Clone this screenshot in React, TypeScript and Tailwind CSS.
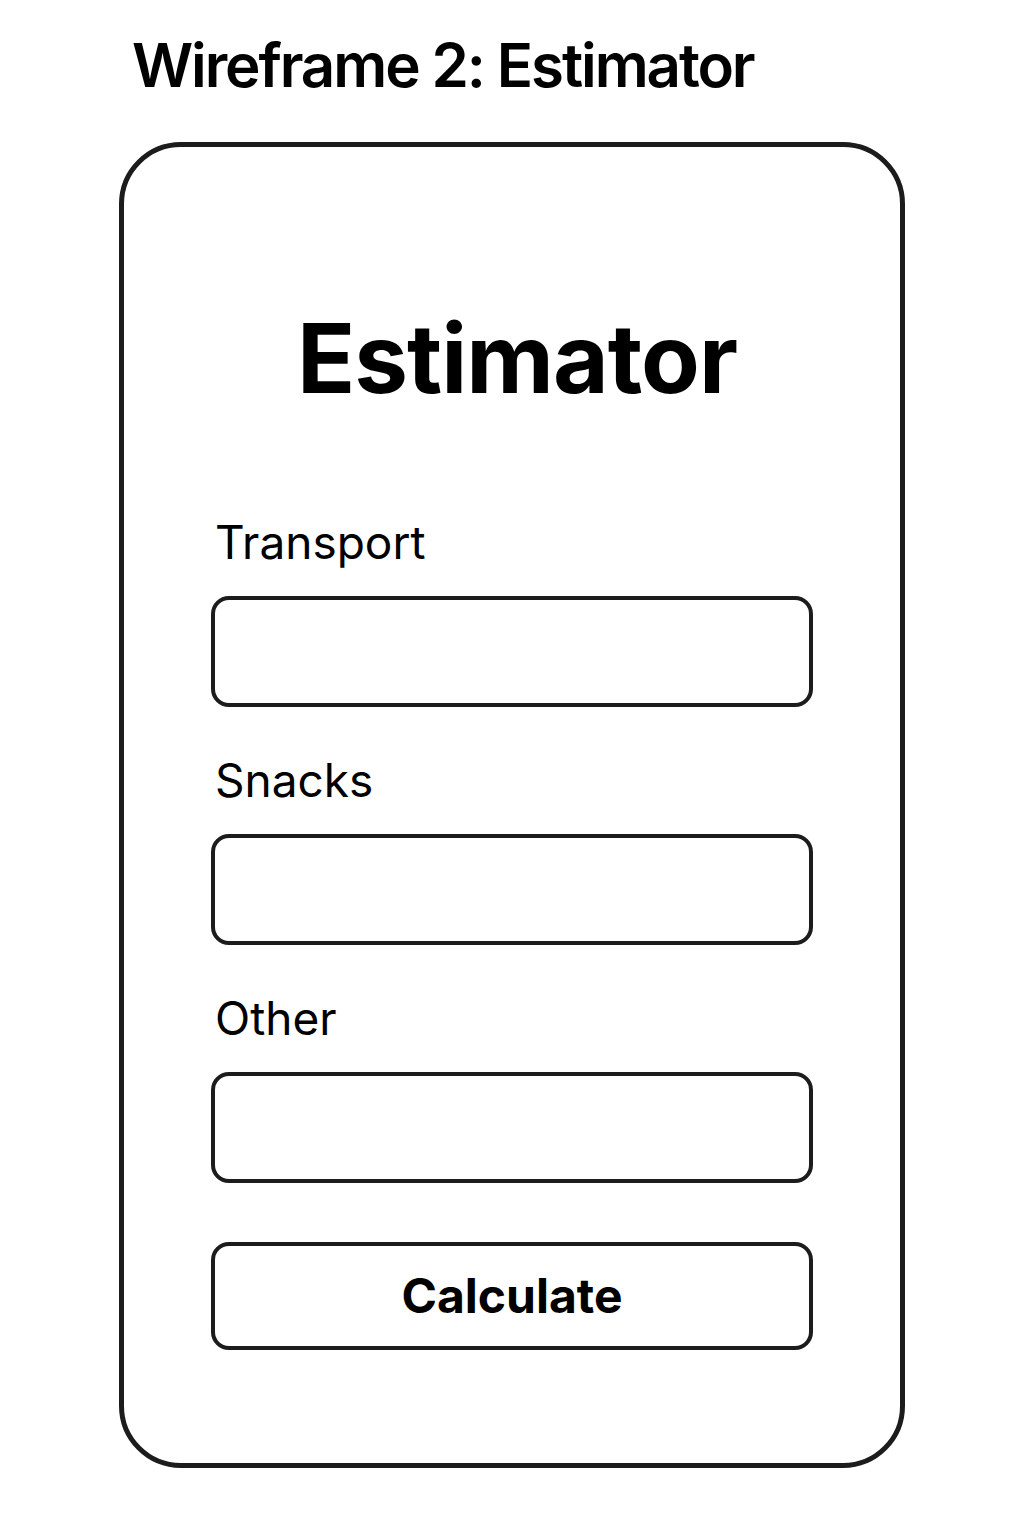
import React from 'react';

const fields = ['Transport', 'Snacks', 'Other'];

export default function App() {
  return (
    <div className="min-h-[1536px] w-[1024px] bg-white text-black font-['Inter','Noto_Sans',sans-serif]">
      <div className="pl-[132px] pt-[35px]">
        <h1 className="text-[60px] leading-none font-semibold tracking-[-0.035em]">Wireframe 2: Estimator</h1>
      </div>

      <div className="mx-[119px] mt-[47px] w-[786px] rounded-[62px] border-[5px] border-[#1c1c1c] pt-[163px] pb-[113px]">
        <h2 className="text-center text-[96px] leading-none font-bold tracking-[-0.01em] pl-[10px]">Estimator</h2>

        <div className="mt-[113px] flex flex-col gap-[50px] px-[87px]">
          {fields.map((f) => (
            <div key={f} className="flex flex-col">
              <label className="pl-[4px] text-[46px] leading-none">{f}</label>
              <input
                type="text"
                className="mt-[31px] h-[111px] w-full rounded-[18px] border-4 border-[#1c1c1c] bg-white outline-none"
              />
            </div>
          ))}
        </div>

        <div className="mt-[59px] px-[87px]">
          <button className="h-[108px] w-full rounded-[18px] border-4 border-[#1c1c1c] bg-white text-[48px] font-bold leading-none">
            Calculate
          </button>
        </div>
      </div>
    </div>
  );
}
